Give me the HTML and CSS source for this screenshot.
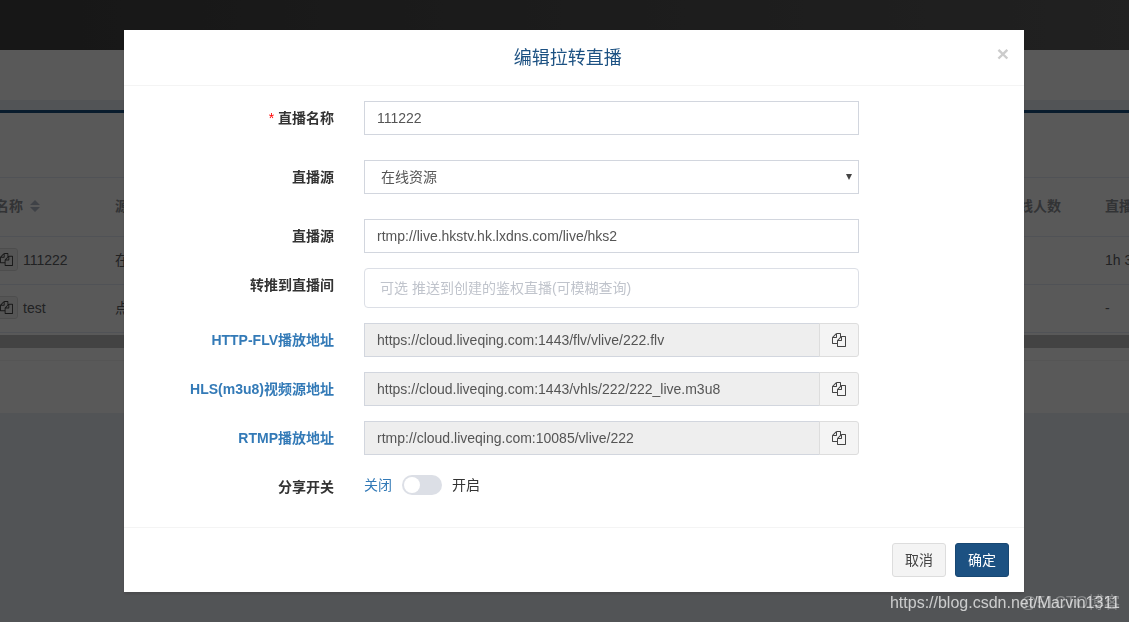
FILE: index.html
```html
<!DOCTYPE html>
<html lang="zh-CN">
<head>
<meta charset="utf-8">
<title>编辑拉转直播</title>
<link rel="stylesheet" href="styles.css">
</head>
<body>
<svg class="sprite" aria-hidden="true">
  <symbol id="copy" viewBox="0 0 1792 1792"><path d="M1696 384q40 0 68 28t28 68v1216q0 40-28 68t-68 28h-960q-40 0-68-28t-28-68v-288h-544q-40 0-68-28t-28-68v-672q0-40 20-88t48-76l408-408q28-28 76-48t88-20h416q40 0 68 28t28 68v328q68-40 128-40h416zm-544 213l-299 299h299v-299zm-640-384l-299 299h299v-299zm196 647l316-316v-416h-384v416q0 40-28 68t-68 28h-416v640h512v-256q0-40 20-88t48-76zm956 804v-1152h-384v416q0 40-28 68t-68 28h-416v640h896z"/></symbol>
</svg>

<div class="page">
  <header class="topbar"></header>
  <div class="tabs"></div>
  <main class="box">
    <div class="box-tools"></div>
    <table class="list">
      <colgroup><col class="col-name"><col><col class="col-online"><col class="col-time"></colgroup>
      <thead>
        <tr>
          <th><span class="sortable">名称 <svg class="sort" viewBox="0 0 10 12" aria-hidden="true"><path d="M5 0l5 5H0zM5 12l5-5H0z"/></svg></span></th>
          <th>源类型</th><th>在线人数</th><th>直播时长</th>
        </tr>
      </thead>
      <tbody>
        <tr>
          <td><span class="name"><button class="mini" type="button" aria-label="复制"><svg class="icon"><use href="#copy"/></svg></button>111222</span></td>
          <td>在线资源</td><td></td><td>1h 32m</td>
        </tr>
        <tr>
          <td><span class="name"><button class="mini" type="button" aria-label="复制"><svg class="icon"><use href="#copy"/></svg></button>test</span></td>
          <td>点播资源</td><td></td><td>-</td>
        </tr>
      </tbody>
    </table>
    <div class="scrollbar"></div>
    <div class="box-foot"></div>
  </main>
</div>

<div class="backdrop">
  <form class="modal" role="dialog" aria-labelledby="title">
    <div class="modal-header">
      <h4 class="modal-title" id="title">编辑拉转直播</h4>
      <button class="close" type="button" aria-label="关闭">×</button>
    </div>
    <div class="modal-body">
      <div class="row spaced">
        <label class="label" for="name"><span class="required">*</span> 直播名称</label>
        <div class="field"><input class="control" id="name" type="text" value="111222"></div>
      </div>
      <div class="row spaced">
        <label class="label" for="kind">直播源</label>
        <div class="field"><div class="select-wrap"><select class="control select" id="kind"><option>在线资源</option></select></div></div>
      </div>
      <div class="row">
        <label class="label" for="source">直播源</label>
        <div class="field"><input class="control" id="source" type="text" value="rtmp://live.hkstv.hk.lxdns.com/live/hks2"></div>
      </div>
      <div class="row">
        <label class="label" for="room">转推到直播间</label>
        <div class="field"><input class="control search" id="room" type="text" placeholder="可选 推送到创建的鉴权直播(可模糊查询)"></div>
      </div>
      <div class="row">
        <label class="label link" for="flv">HTTP-FLV播放地址</label>
        <div class="field group"><input class="control" id="flv" type="text" readonly value="https://cloud.liveqing.com:1443/flv/vlive/222.flv"><button class="copy" type="button" aria-label="复制"><svg class="icon"><use href="#copy"/></svg></button></div>
      </div>
      <div class="row">
        <label class="label link" for="hls">HLS(m3u8)视频源地址</label>
        <div class="field group"><input class="control" id="hls" type="text" readonly value="https://cloud.liveqing.com:1443/vhls/222/222_live.m3u8"><button class="copy" type="button" aria-label="复制"><svg class="icon"><use href="#copy"/></svg></button></div>
      </div>
      <div class="row">
        <label class="label link" for="rtmp">RTMP播放地址</label>
        <div class="field group"><input class="control" id="rtmp" type="text" readonly value="rtmp://cloud.liveqing.com:10085/vlive/222"><button class="copy" type="button" aria-label="复制"><svg class="icon"><use href="#copy"/></svg></button></div>
      </div>
      <div class="row share">
        <label class="label" for="share">分享开关</label>
        <div class="field switch"><span class="off">关闭</span><input class="toggle" id="share" type="checkbox"><span>开启</span></div>
      </div>
    </div>
    <div class="modal-footer">
      <button class="btn" type="button">取消</button>
      <button class="btn primary" type="button">确定</button>
    </div>
  </form>
</div>
<div class="mark mark-site">@51CTO博客</div>
<div class="mark mark-blog">https://blog.csdn.net/Marvin1311</div>
</body>
</html>
```
FILE: styles.css
```css
* { box-sizing: border-box; }
body {
  margin: 0;
  min-height: 100vh;
  overflow: hidden;
  background: #ecf0f5;
  color: #333;
  font: 14px/20px "Liberation Sans", "Noto Sans CJK SC", sans-serif;
}
button, input, select { font: inherit; color: inherit; }
.sprite { position: absolute; width: 0; height: 0; }
.icon { display: block; width: 14px; height: 14px; fill: currentColor; }

/* Page behind the dialog */
.page { overflow: hidden; }
.topbar { height: 50px; background: linear-gradient(to right, #424242, #5e5e5e); }
.tabs { height: 50px; margin-bottom: 10px; background: #fff; }
.box { background: #fff; border-top: 3px solid #1c5182; box-shadow: 0 1px 1px rgba(0, 0, 0, .1); }
.box-tools { height: 64px; }
.list {
  width: calc(100% + 60px);
  margin-left: -15px;
  table-layout: fixed;
  border-collapse: collapse;
  border-top: 1px solid #e6ebf5;
  color: #606266;
}
.col-name { width: 120px; }
.col-online { width: 100px; }
.col-time { width: 79px; }
.list th, .list td { padding: 0 10px 2px; text-align: left; border-bottom: 1px solid #e6ebf5; white-space: nowrap; }
.list th { height: 59px; color: #909399; }
.list td { height: 48px; }
.sortable { display: flex; align-items: center; gap: 7px; }
.sort { width: 10px; height: 12px; fill: #b4bccc; }
.name { display: flex; align-items: center; gap: 5px; }
.mini { padding: 4px; background: #f4f4f4; border: 1px solid #ddd; border-radius: 3px; color: #444; }
.mini .icon { width: 13px; height: 13px; }
.scrollbar { height: 13px; margin-top: 2px; background: #c1c1c1; }
.box-foot { height: 53px; margin-top: 12px; border-top: 1px solid #f4f4f4; }

/* Dialog */
.backdrop {
  position: fixed;
  inset: 0;
  padding: 30px 0 30px 19px;
  background: rgba(0, 0, 0, .65);
}
.modal { width: 100%; max-width: 900px; margin: 0 auto; background: #fff; box-shadow: 0 2px 3px rgba(0, 0, 0, .125); }
.modal-header { display: flex; align-items: flex-start; padding: 15px; border-bottom: 1px solid #f4f4f4; }
.modal-title { flex: 1; margin: 0; padding-top: 1px; font-size: 18px; font-weight: 400; line-height: 24px; text-align: center; color: #1c5182; }
.close { padding: 0; border: 0; background: none; font-size: 21px; font-weight: 700; line-height: 18px; color: #ccc; }
.modal-body { padding: 15px 0; }
.row { display: grid; grid-template-columns: 3fr 7fr 2fr; margin-bottom: 15px; }
.row.spaced { margin-bottom: 25px; }
.row.share { min-height: 42px; margin-bottom: 0; }
.label { padding: 7px 15px 0; font-weight: 700; text-align: right; }
.required { color: #f00; font-weight: 400; }
.link { color: #337ab7; }
.field { padding: 0 15px; }
.control {
  display: block;
  width: 100%;
  height: 34px;
  padding: 6px 12px;
  border: 1px solid #d2d6de;
  border-radius: 0;
  background: #fff;
  color: #555;
}
.control[readonly] { background: #eee; }
.select-wrap { position: relative; }
.select-wrap::after { content: ""; position: absolute; right: 7px; top: 14px; border: solid transparent; border-width: 6px 3px 0; border-top-color: #444; }
.select { padding-left: 16px; appearance: none; }
.search { height: 40px; padding: 0 15px; border-color: #dcdfe6; border-radius: 4px; }
.search::placeholder { color: #c0c4cc; }
.group { display: flex; }
.copy { flex: none; width: 40px; margin-left: -1px; padding: 0 12px; background: #f4f4f4; border: 1px solid #ddd; border-radius: 0 3px 3px 0; color: #444; }
.switch { display: flex; align-items: center; align-self: start; gap: 10px; padding-top: 5px; }
.off { color: #337ab7; }
.toggle { width: 40px; height: 20px; margin: 0; padding: 2px; appearance: none; background: #dcdfe6; border-radius: 10px; }
.toggle::before { content: ""; display: block; width: 16px; height: 16px; border-radius: 50%; background: #fff; }
.toggle:checked { background: #337ab7; }
.toggle:checked::before { margin-left: auto; }
.modal-footer { display: flex; justify-content: flex-end; gap: 9px; padding: 15px; border-top: 1px solid #f4f4f4; }
.btn { height: 34px; padding: 0 12px; background: #f4f4f4; border: 1px solid #ddd; border-radius: 3px; color: #444; }
.primary { background: #1c5182; border-color: #184772; color: #fff; }

/* Watermarks */
.mark { position: fixed; right: 9px; bottom: 9px; font-size: 16px; line-height: 20px; white-space: nowrap; }
.mark-site { color: rgba(255, 255, 255, .3); }
.mark-blog { color: rgba(255, 255, 255, .7); }
```
